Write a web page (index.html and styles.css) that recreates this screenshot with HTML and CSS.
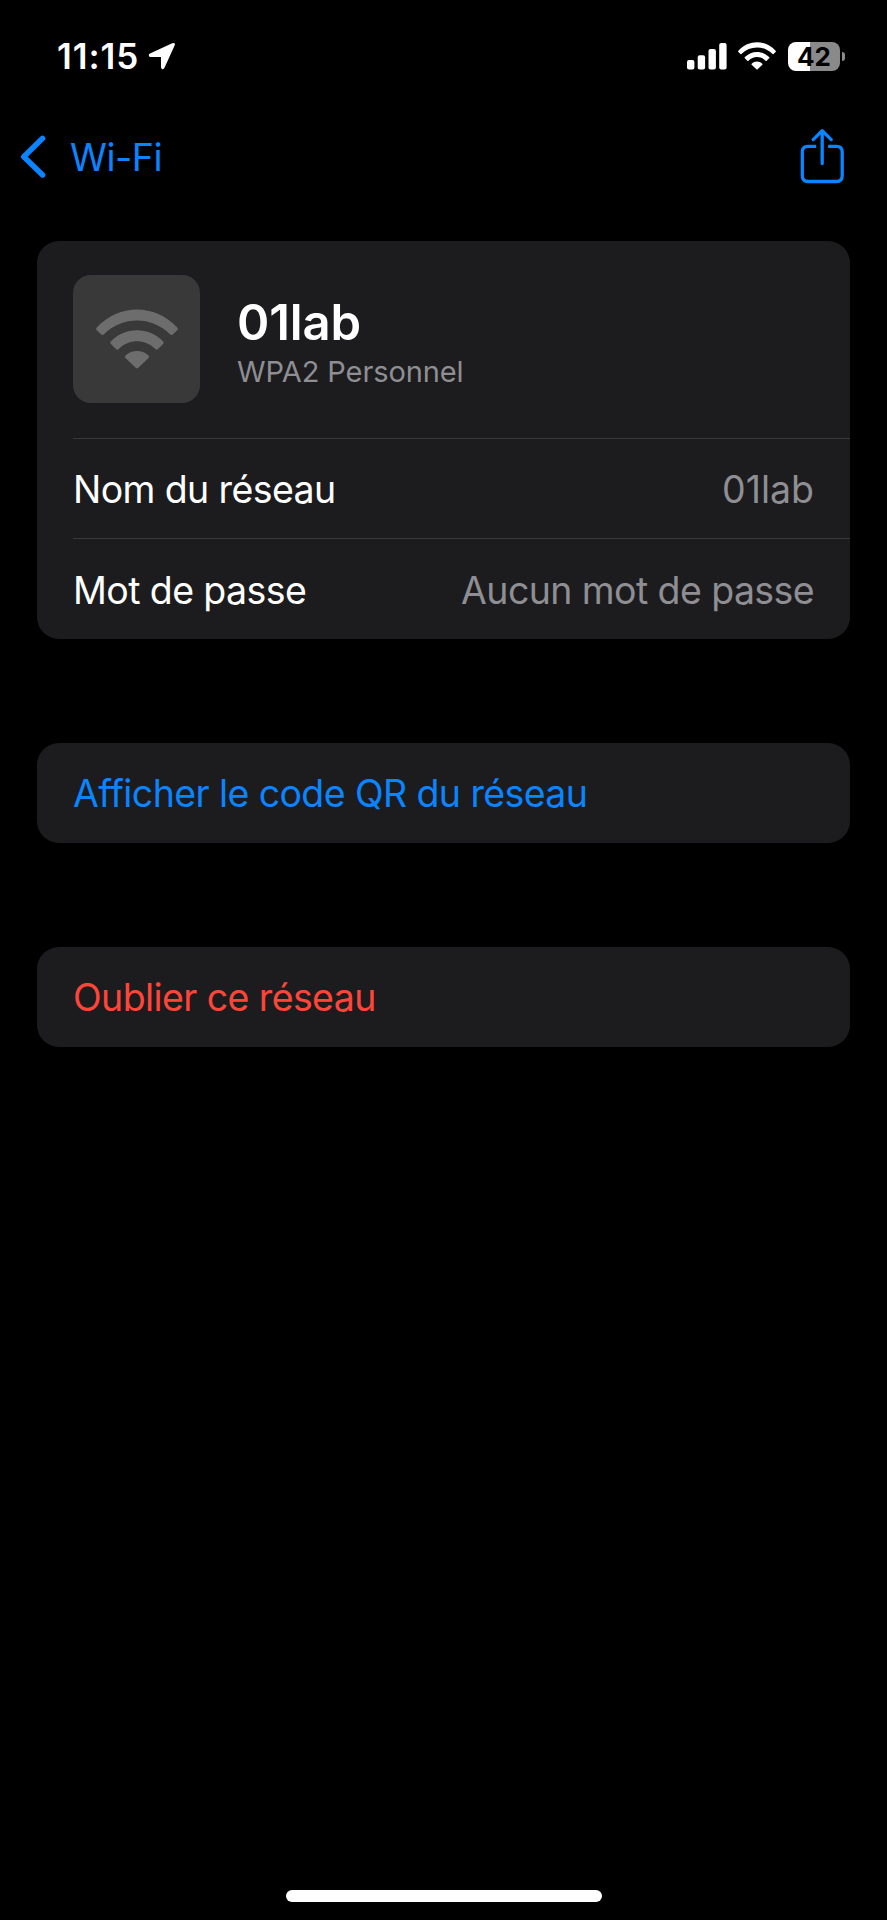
FILE: index.html
```
<!DOCTYPE html>
<html lang="fr">
<head>
    <meta charset="UTF-8">
    <title>Wi-Fi | 01lab</title>
    <link rel="stylesheet" href="styles.css">
</head>
<body>
<div class="screen">
    <header class="status">
        <div class="status-left">
            <span class="time">11:15</span>
            <svg class="location" width="28" height="28" viewBox="0 0 28 28">
                <path d="M2 11.5 L24.2 1.2 Q27.8 0 26.6 3.6 L16.5 25.8 Q15.5 27.8 14 27 Q13 26.5 13 25 V15 H2.8 Q1 15 .8 13.5 Q.6 12.2 2 11.5Z" fill="#fff"/>
            </svg>
        </div>
        <div class="status-right">
            <svg class="signal" width="40" height="27" viewBox="0 0 40 27">
                <g fill="#fff">
                    <rect x="0" y="17" width="7.4" height="9.6" rx="2"/>
                    <rect x="10.7" y="12.3" width="7.4" height="14.3" rx="2"/>
                    <rect x="21.5" y="6" width="7.4" height="20.6" rx="2"/>
                    <rect x="32.2" y="0" width="7.4" height="26.6" rx="2"/>
                </g>
            </svg>
            <svg class="wifi-small" width="38" height="28" viewBox="0 0 82 60">
                <use href="#wifi"/>
            </svg>
            <div class="battery">
                <div class="battery-body"><span>42</span></div>
                <div class="battery-cap"></div>
            </div>
        </div>
    </header>

    <nav class="navbar">
        <a class="back" href="#">
            <svg width="26" height="44" viewBox="0 0 26 44">
                <path d="M22.6 3.3 L3.8 21.7 L22.6 40" fill="none" stroke="#0a84ff" stroke-width="5.4" stroke-linecap="round" stroke-linejoin="round"/>
            </svg>
            <span>Wi-Fi</span>
        </a>
        <a class="share" href="#">
            <svg width="44" height="56" viewBox="0 0 44 56">
                <g fill="none" stroke="#0a84ff" stroke-width="3.3" stroke-linecap="round" stroke-linejoin="round">
                    <path stroke-linecap="butt" d="M16.2 17.3 H8 Q2.3 17.3 2.3 23 V46.8 Q2.3 52.5 8 52.5 H36.5 Q42.2 52.5 42.2 46.8 V23 Q42.2 17.3 36.5 17.3 H28.1"/>
                    <path d="M22.2 34.5 V2 M13.2 10.6 L22.2 1.8 L31.2 10.6"/>
                </g>
            </svg>
        </a>
    </nav>

    <main class="content">
        <section class="card">
            <div class="network">
                <div class="network-icon">
                    <svg width="82" height="60" viewBox="0 0 82 60">
                        <g id="wifi">
                            <path d="M.8 18.6 Q-.5 20 .8 21.3 L5.3 25.5 Q6.6 26.7 8 25.3 C26 6.8 56 6.8 74 25.3 Q75.4 26.7 76.7 25.5 L81.2 21.3 Q82.5 20 81.2 18.6 C59 -5.5 23 -5.5 .8 18.6Z"/>
                            <path d="M14.8 32.4 Q13.6 33.7 14.9 35 L20 40.1 Q21.3 41.3 22.7 40 C33 29.7 49 29.7 59.3 40 Q60.7 41.3 62 40.1 L67.1 35 Q68.4 33.7 67.2 32.4 C52.5 17.6 29.5 17.6 14.8 32.4Z"/>
                            <path d="M29.5 46.5 C36 40.6 46 40.6 52.5 46.5 Q53.8 47.8 52.5 49.1 L42.3 58.7 Q41 60 39.7 58.7 L29.5 49.1 Q28.2 47.8 29.5 46.5Z"/>
                        </g>
                    </svg>
                </div>
                <div class="network-text">
                    <h1>01lab</h1>
                    <p>WPA2 Personnel</p>
                </div>
            </div>
            <div class="row">
                <span>Nom du réseau</span>
                <span class="value short">01lab</span>
            </div>
            <div class="row">
                <span>Mot de passe</span>
                <span class="value">Aucun mot de passe</span>
            </div>
        </section>

        <a class="card action" href="#">Afficher le code QR du réseau</a>
        <a class="card action forget" href="#">Oublier ce réseau</a>
    </main>

    <div class="home-bar"></div>
</div>
</body>
</html>
```
FILE: styles.css
```
* {
    box-sizing: border-box;
}

body {
    margin: 0;
    background: #000;
    color: #fff;
    font-family: Inter, "Liberation Sans", sans-serif;
    font-size: 37.5px;
}

a {
    text-decoration: none;
    color: #0a84ff;
}

svg {
    display: block;
    flex: none;
}

.screen {
    width: 887px;
    height: 1920px;
    display: flex;
    flex-direction: column;
    overflow: hidden;
}

/* status bar */
.status {
    height: 112px;
    padding: 0 42px 0 57px;
    display: flex;
    justify-content: space-between;
}

.status-left, .status-right {
    display: flex;
    align-items: center;
    height: 112px;
}

.time {
    font-size: 35px;
    font-weight: 600;
    letter-spacing: 0.9px;
    width: 91px;
    white-space: nowrap;
}

.location {
    margin-bottom: 1px;
}

.signal {
    margin-right: 11px;
}

.wifi-small {
    fill: #fff;
    margin-right: 12px;
}

.battery {
    display: flex;
    align-items: center;
}

.battery-body {
    width: 52px;
    height: 29px;
    border-radius: 8px;
    background: linear-gradient(to right, #fff 42%, #8a8a8a 42%);
    color: #000;
    font-size: 26px;
    font-weight: 700;
    line-height: 29px;
    text-align: center;
}

.battery-cap {
    width: 3px;
    height: 9px;
    margin-left: 2px;
    border-radius: 0 4px 4px 0;
    background: #8a8a8a;
}

/* navigation */
.navbar {
    height: 129px;
    padding: 16px 43px 0 20px;
    display: flex;
    justify-content: space-between;
    align-items: flex-start;
}

.back {
    display: flex;
    align-items: center;
    height: 58px;
    gap: 24px;
    letter-spacing: -0.5px;
}

.share {
    padding-top: 1px;
}

/* cards */
.content {
    flex: 1;
    padding: 0 37px;
}

.card {
    display: block;
    background: #1c1c1e;
    border-radius: 22px;
    letter-spacing: -0.6px;
}

.network {
    height: 197px;
    padding: 34px 36px 0;
    display: flex;
    gap: 37px;
}

.network-icon {
    width: 127px;
    height: 128px;
    border-radius: 18px;
    background: #393939;
    fill: #6d6d6d;
    display: flex;
    align-items: center;
    justify-content: center;
}

.network-text {
    padding-top: 18px;
    letter-spacing: -0.1px;
}

.network-text h1 {
    margin: 0;
    font-size: 49px;
    font-weight: 600;
    line-height: 60px;
}

.network-text p {
    margin: 0;
    font-size: 29px;
    line-height: 38px;
    color: #8e8e93;
}

.row {
    height: 100px;
    margin-left: 36px;
    padding: 2px 36px 0 0;
    border-top: 1px solid #38383a;
    display: flex;
    align-items: center;
    justify-content: space-between;
}

.row:last-child {
    height: 101px;
}

.value {
    color: #8e8e93;
}

.short {
    letter-spacing: 0;
}

.action {
    height: 100px;
    line-height: 102px;
    padding-left: 36px;
    margin-top: 104px;
}

.forget {
    color: #ff453a;
}

.home-bar {
    width: 316px;
    height: 12px;
    margin: 0 auto 18px;
    border-radius: 6px;
    background: #fff;
}
```
